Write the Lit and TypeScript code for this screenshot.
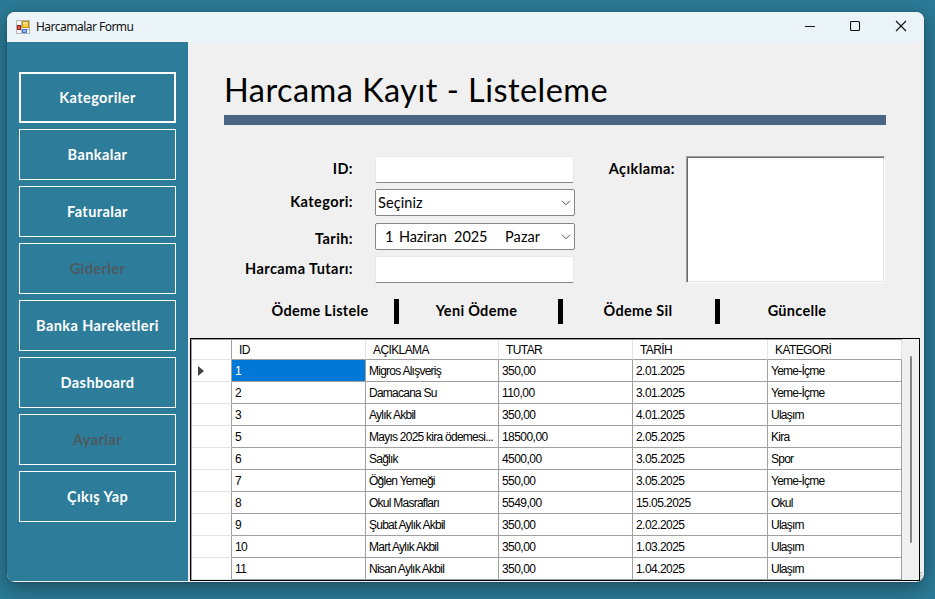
import { LitElement, html, css, svg, nothing } from "lit";
import { customElement } from "lit/decorators.js";
import { classMap } from "lit/directives/class-map.js";

interface MenuItem {
  label: string;
  disabled?: boolean;
  focused?: boolean;
}

const MENU: MenuItem[] = [
  { label: "Kategoriler", focused: true },
  { label: "Bankalar" },
  { label: "Faturalar" },
  { label: "Giderler", disabled: true },
  { label: "Banka Hareketleri" },
  { label: "Dashboard" },
  { label: "Ayarlar", disabled: true },
  { label: "Çıkış Yap" },
];

const COLUMNS = ["ID", "AÇIKLAMA", "TUTAR", "TARİH", "KATEGORİ"];

const ROWS = [
  ["1", "Migros Alışveriş", "350,00", "2.01.2025", "Yeme-İçme"],
  ["2", "Damacana Su", "110,00", "3.01.2025", "Yeme-İçme"],
  ["3", "Aylık Akbil", "350,00", "4.01.2025", "Ulaşım"],
  ["5", "Mayıs 2025 kira ödemesi...", "18500,00", "2.05.2025", "Kira"],
  ["6", "Sağlık", "4500,00", "3.05.2025", "Spor"],
  ["7", "Öğlen Yemeği", "550,00", "3.05.2025", "Yeme-İçme"],
  ["8", "Okul Masrafları", "5549,00", "15.05.2025", "Okul"],
  ["9", "Şubat Aylık Akbil", "350,00", "2.02.2025", "Ulaşım"],
  ["10", "Mart Aylık Akbil", "350,00", "1.03.2025", "Ulaşım"],
  ["11", "Nisan Aylık Akbil", "350,00", "1.04.2025", "Ulaşım"],
];

@customElement("title-bar")
class TitleBar extends LitElement {
  static styles = css`
    :host {
      display: flex;
      align-items: center;
      height: 30px;
      background: #ebf4f8;
      font: 12px "Noto Sans", sans-serif;
      color: #111;
    }
    .icon { margin: -1px 0 0 9px; display: block; }
    .name { flex: 1; margin: -1px 0 0 6px; letter-spacing: -0.52px; }
    .controls { display: flex; align-items: center; margin-right: 17px; gap: 33px; }
    .controls svg { display: block; margin-top: -2px; }
  `;
  render() {
    return html`
      <svg class="icon" width="14" height="14" viewBox="0 0 14 14">
        <rect x=".5" y=".5" width="13" height="13" fill="#f4f6f8" stroke="#b3b7bb" />
        <path d="M5.5 1v12M1 9.5h12" stroke="#b3b7bb" />
        <rect x="6.5" y="1.5" width="6" height="6" fill="#f7cf4b" stroke="#c8940f" />
        <rect x="7" y="2" width="4" height="2" fill="#fbe594" />
        <rect x="1.5" y="5.5" width="3" height="4" fill="#e0604c" stroke="#921f18" />
        <rect x="6.5" y="9.5" width="4" height="3" fill="#8db5f5" stroke="#4374d4" />
      </svg>
      <span class="name">Harcamalar Formu</span>
      <div class="controls">
        <svg width="12" height="12" viewBox="0 0 12 12"><path d="M0 6.5h10" stroke="#111" /></svg>
        <svg width="12" height="12" viewBox="0 0 12 12">
          <rect x=".5" y="1.5" width="9" height="9" rx="1" fill="none" stroke="#111" stroke-width="1.1" />
        </svg>
        <svg width="12" height="12" viewBox="0 0 12 12">
          <path d="M1 1l10 10M11 1L1 11" stroke="#111" stroke-width="1.1" />
        </svg>
      </div>
    `;
  }
}

@customElement("side-menu")
class SideMenu extends LitElement {
  static styles = css`
    :host {
      display: flex;
      flex-direction: column;
      gap: 6px;
      box-sizing: border-box;
      width: 181px;
      padding: 30px 12px 0;
      background: #2d7d9a;
    }
    button {
      height: 51px;
      padding: 0;
      border: 1px solid #fff;
      background: none;
      color: #fff;
      font: bold 14.5px Lato, sans-serif;
      letter-spacing: 0.42px;
    }
    .focused { border-width: 2px; }
    .disabled { color: #4d5960; }
  `;
  render() {
    return MENU.map(
      (m) => html`<button class=${classMap({ focused: !!m.focused, disabled: !!m.disabled })}>${m.label}</button>`,
    );
  }
}

const chevron = () => svg`<svg class="chevron" width="10" height="6" viewBox="0 0 10 6">
  <path d="M1 .8l4 4 4-4" fill="none" stroke="#555" stroke-width="1" /></svg>`;

@customElement("expense-form")
class ExpenseForm extends LitElement {
  static styles = css`
    :host {
      display: block;
      font: 14.5px Lato, sans-serif;
      color: #000;
    }
    h1 {
      margin: 0 38px 0 36px;
      box-sizing: border-box;
      height: 83px;
      padding-top: 25px;
      border-bottom: 10px solid #4b6584;
      font-size: 32.5px;
      font-weight: 400;
      line-height: 46px;
      letter-spacing: 0.46px;
      white-space: nowrap;
    }
    .fields { display: flex; margin-top: 31px; }
    .left { width: 387px; }
    .line { display: flex; height: 27px; }
    .line + .line { margin-top: 6px; }
    .line.date { margin-top: 7px; }
    .label, .memo-label {
      text-align: right;
      font-weight: bold;
      line-height: 25px;
      letter-spacing: 0.42px;
      white-space: nowrap;
    }
    .label { width: 165px; margin-right: 22px; }
    .date .label { padding-top: 3px; }
    .input, .combo { box-sizing: border-box; background: #fff; }
    .input {
      width: 199px;
      border: 1px solid #e8e8e8;
      border-bottom-color: #868686;
      border-radius: 2px;
    }
    .combo {
      display: flex;
      align-items: center;
      width: 200px;
      border: 1px solid #868686;
      border-radius: 2px;
      padding: 0 3px 0 2px;
    }
    .combo .value { flex: 1; white-space: pre; margin-top: -1px; letter-spacing: 0.1px; }
    .date .value { padding-left: 7px; display: flex; margin-top: 0; }
    .day { width: 14px; }
    .month { width: 106px; letter-spacing: -0.1px; }
    .memo-label { width: 100px; }
    .memo {
      box-sizing: border-box;
      width: 199px;
      height: 127px;
      margin: 0 0 1px 11px;
      background: #fff;
      border: 1px solid #a0a0a0;
      border-right-color: #fff;
      border-bottom-color: #fff;
      box-shadow: inset 1px 1px #696969, inset -1px -1px #e3e3e3;
    }
    .actions {
      display: grid;
      grid-template-columns: 134px 5px 159px 5px 152px 5px 154px;
      height: 25px;
      margin: 15px 0 0 72px;
      text-align: center;
      font-weight: bold;
      line-height: 24px;
      letter-spacing: 0.3px;
    }
    .actions > :first-child { padding-right: 14px; }
    .actions > :nth-child(3) { padding-right: 4px; }
    .actions > :nth-child(5) { padding-right: 2px; }
    .sep { background: #000; }
  `;
  render() {
    return html`
      <h1>Harcama Kayıt - Listeleme</h1>
      <div class="fields">
        <div class="left">
          <div class="line"><div class="label">ID:</div><div class="input"></div></div>
          <div class="line">
            <div class="label">Kategori:</div>
            <div class="combo"><span class="value">Seçiniz</span>${chevron()}</div>
          </div>
          <div class="line date">
            <div class="label">Tarih:</div>
            <div class="combo">
              <span class="value"><span class="day">1</span><span class="month">Haziran  2025</span><span>Pazar</span></span>
              ${chevron()}
            </div>
          </div>
          <div class="line"><div class="label">Harcama Tutarı:</div><div class="input"></div></div>
        </div>
        <div class="memo-label">Açıklama:</div>
        <div class="memo"></div>
      </div>
      <div class="actions">
        <span>Ödeme Listele</span><i class="sep"></i><span>Yeni Ödeme</span><i class="sep"></i
        ><span>Ödeme Sil</span><i class="sep"></i><span>Güncelle</span>
      </div>
    `;
  }
}

@customElement("expense-grid")
class ExpenseGrid extends LitElement {
  static styles = css`
    :host {
      display: flex;
      box-sizing: border-box;
      width: 730px;
      height: 243px;
      margin: 14px 0 0 2px;
      border: 1px solid #000;
      background: #f0f0f0;
      font: 12px "Liberation Sans", sans-serif;
      letter-spacing: -0.55px;
      color: #000;
    }
    .table {
      display: grid;
      grid-template-columns: 40px 134px 133px 134px 135px 134px;
      grid-template-rows: 20px;
      grid-auto-rows: 22px;
      width: 710px;
      border-top: 1px solid #a0a0a0;
      border-left: 1px solid #a0a0a0;
      background: #fff;
    }
    .cell, .head, .mark {
      box-sizing: border-box;
      border-right: 1px solid #a0a0a0;
      border-bottom: 1px solid #a0a0a0;
      white-space: nowrap;
      overflow: hidden;
    }
    .cell { padding-left: 3px; line-height: 22px; }
    .words { letter-spacing: -0.75px; }
    .head { padding-left: 7px; line-height: 20px; border-right-color: #e3e3e3; letter-spacing: -0.6px; }
    .mark { border-bottom-color: #e3e3e3; display: flex; align-items: center; padding-left: 6px; }
    .selected { background: #0078d7; color: #fff; }
    .scroll { flex: 1; display: flex; justify-content: center; }
    .thumb { width: 2px; height: 187px; margin: 17px 0 0 1px; background: #858585; border-radius: 1px; }
  `;
  render() {
    return html`
      <div class="table">
        <div class="mark"></div>
        ${COLUMNS.map((c) => html`<div class="head">${c}</div>`)}
        ${ROWS.map(
          (row, r) => html`
            <div class="mark">
              ${r === 0
                ? html`<svg width="6" height="10" viewBox="0 0 6 10"><path d="M0 0v10L6 5z" fill="#444" /></svg>`
                : nothing}
            </div>
            ${row.map(
              (v, c) =>
                html`<div class=${classMap({ cell: true, words: c === 1 || c === 4, selected: r === 0 && c === 0 })}>${v}</div>`,
            )}
          `,
        )}
      </div>
      <div class="scroll"><div class="thumb"></div></div>
    `;
  }
}

@customElement("app-root")
class AppRoot extends LitElement {
  static styles = css`
    :host {
      display: block;
      box-sizing: border-box;
      width: 935px;
      height: 599px;
      padding: 12px 11px 17px 7px;
      background: #2b7a96;
      overflow: hidden;
    }
    .window {
      position: relative;
      height: 570px;
      border-radius: 8px;
      overflow: hidden;
      background: #f0f0f0;
      box-shadow: 0 0 2px rgba(0, 0, 0, 0.35), 0 6px 20px rgba(0, 0, 0, 0.36);
    }
    .body { display: flex; height: 539px; }
    .main { flex: 1; min-width: 0; }
    .grip { position: absolute; right: 1px; bottom: 1px; }
  `;
  render() {
    return html`
      <div class="window">
        <title-bar></title-bar>
        <div class="body">
          <side-menu></side-menu>
          <div class="main">
            <expense-form></expense-form>
            <expense-grid></expense-grid>
          </div>
        </div>
        <svg class="grip" width="3" height="9" viewBox="0 0 3 9">
          <path d="M0 1h2M0 4h2M0 7h2" stroke="#b4b4b4" stroke-width="1.6" />
        </svg>
      </div>
    `;
  }
}
